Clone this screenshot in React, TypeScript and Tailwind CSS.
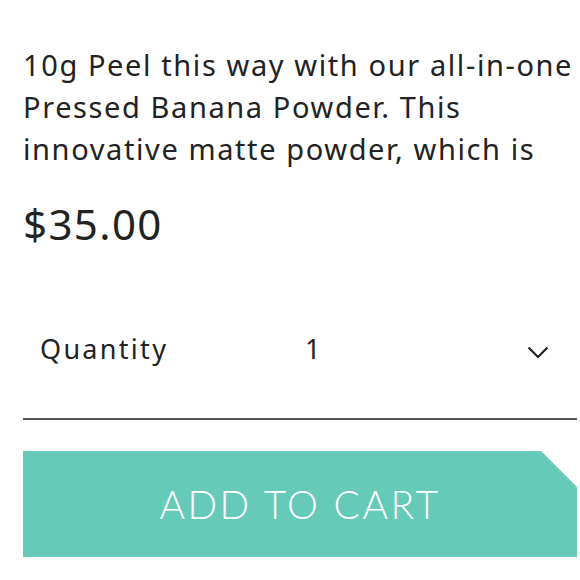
import React, { useState } from 'react';

const App: React.FC = () => {
  const [qty] = useState(1);

  return (
    <div className="w-[580px] h-[580px] bg-white overflow-hidden font-['Noto_Sans',sans-serif] text-[#222]">
      <div className="pl-[23px]">
        {/* Description */}
        <p className="pt-[44px] pr-[3px] text-[29px] leading-[42px] tracking-[1.6px]">
          10g Peel this way with our all-in-one Pressed Banana Powder. This innovative matte powder, which is
        </p>

        {/* Price */}
        <div className="mt-[29px] text-[42px] leading-[50px] tracking-[1.4px]">$35.00</div>

        {/* Quantity select */}
        <div className="mt-[82px] mr-[3px] border-b-2 border-[#555] pl-[17px] pr-[28px] pb-[51px] flex items-center">
          <span className="text-[27px] leading-[36px] tracking-[2.3px] w-[265px]">Quantity</span>
          <span className="text-[27px] leading-[36px] flex-1">{qty}</span>
          <svg width="22" height="13" viewBox="0 0 22 13" fill="none" className="mt-[6px]">
            <path d="M1.5 1.5 L11 11 L20.5 1.5" stroke="#222" strokeWidth="2.2" />
          </svg>
        </div>

        {/* Add to cart */}
        <button className="mt-[31px] w-[554px] h-[106px] bg-[#66cab9] text-white [clip-path:polygon(0_0,calc(100%_-_36px)_0,100%_36px,100%_100%,0_100%)] flex items-center justify-center">
          <span className="font-['Lato',sans-serif] font-light text-[39px] tracking-[2.5px]">ADD TO CART</span>
        </button>
      </div>
    </div>
  );
};

export default App;
